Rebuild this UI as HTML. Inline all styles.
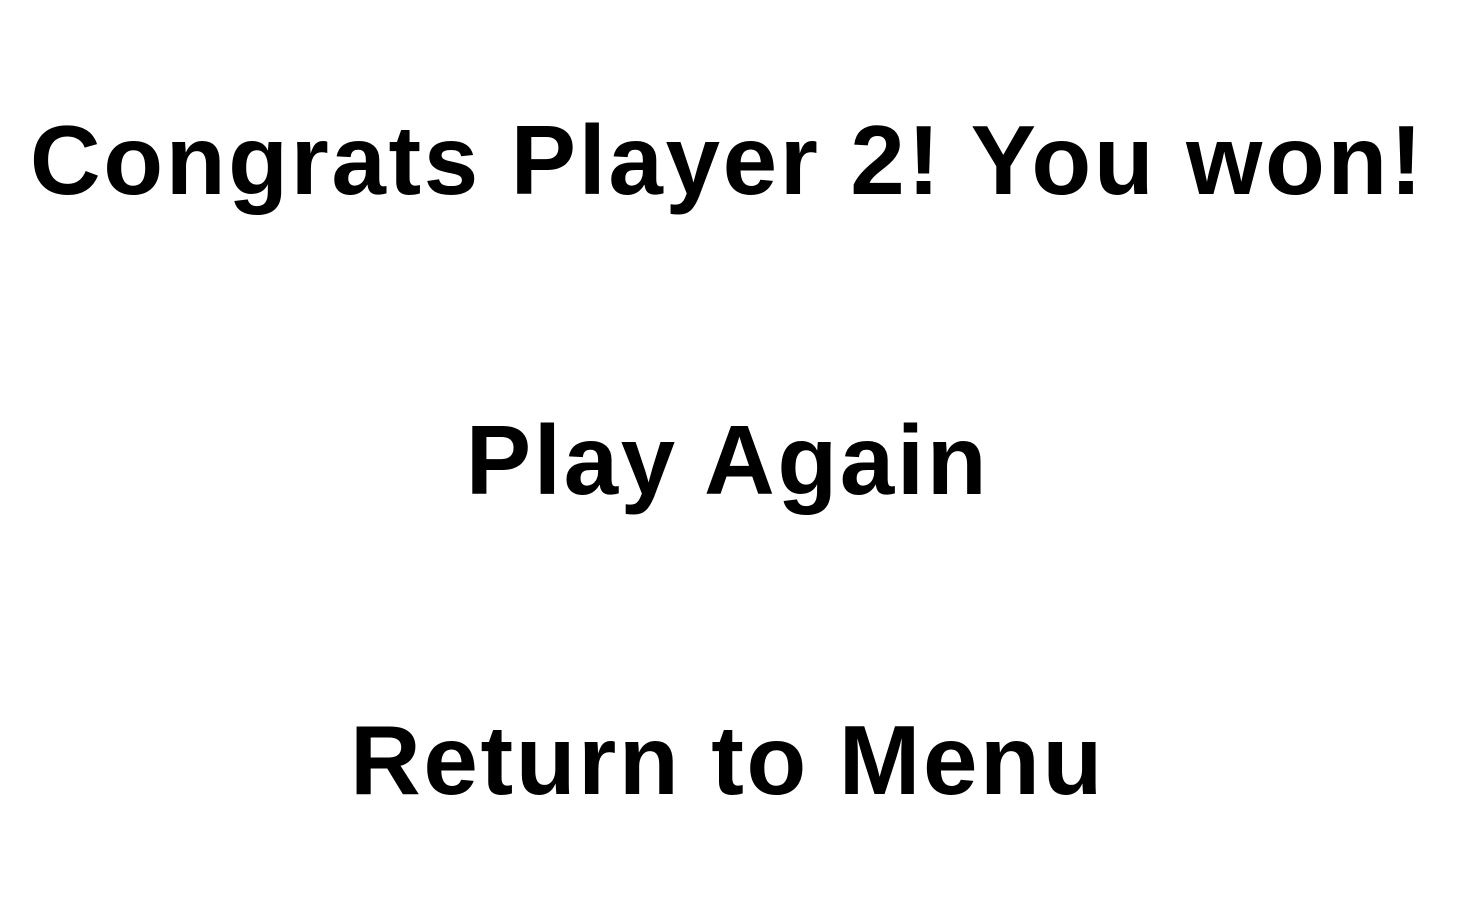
<!DOCTYPE html>
<html><head><style>
html,body{margin:0;padding:0;background:#fff;width:1468px;height:916px;overflow:hidden}
.t{position:absolute;left:0;width:1455px;text-align:center;font-family:"Liberation Sans",Arial,sans-serif;font-weight:bold;font-size:98px;line-height:98px;letter-spacing:2.6px;color:#000;white-space:nowrap}
</style></head><body>
<div class="t" style="top:111px">Congrats Player 2! You won!</div>
<div class="t" style="top:411px">Play Again</div>
<div class="t" style="top:711px">Return to Menu</div>
</body></html>
